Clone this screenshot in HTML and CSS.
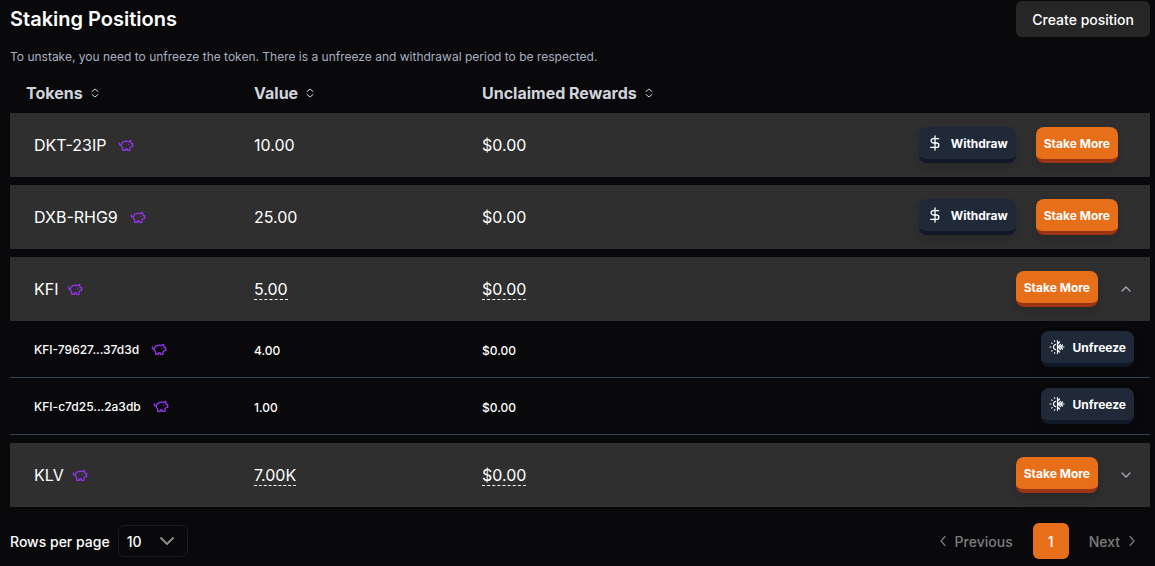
FILE: index.html
```html
<!DOCTYPE html>
<html lang="en">
<head>
    <meta charset="UTF-8">
    <meta name="viewport" content="width=device-width, initial-scale=1.0">
    <title>Staking Positions</title>
    <link rel="stylesheet" href="styles.css">
</head>
<body>
    <!-- icon set -->
    <svg class="sprite" aria-hidden="true">
        <symbol id="piggy" viewBox="0 0 24 24">
            <path d="M19 5c-1.500 0-2.800 1.400-3 2-3.500-1.500-11-.3-11 5 0 1.800 0 3 2 4.500V20h4v-2h3v2h4v-4c1-.5 1.700-1 2-2h2v-4h-2c0-1-.5-1.500-1-2V5z"/>
            <path d="M2 9v1c0 1.100.9 2 2 2h1M16 11h.01"/>
        </symbol>
        <symbol id="sort" viewBox="0 0 8 10">
            <path d="M1 3.500L4 1l3 2.500M1 6.500L4 9l3-2.500"/>
        </symbol>
        <symbol id="dollar" viewBox="0 0 24 24">
            <path d="M12 1.500v21M17.500 5.500H9.500a3.250 3.250 0 0 0 0 6.500h5a3.250 3.250 0 0 1 0 6.500H5.500"/>
        </symbol>
        <symbol id="unfreeze" viewBox="0 0 16 16">
            <path d="M8.500 1.500v13M6.500 5.300a2.800 2.800 0 0 0 0 5.400M9 8h6M9 4.500l1.500-1.500M9 11.500l1.500 1.500M11.500 8l2-2M11.500 8l2 2M9 8l2.500-2.500M9 8l2.500 2.500M1 8h1M2.700 4l.5.400M2.700 12l.5-.4M5.500 1.800l.2.500M5.500 14.200l.2-.5"/>
        </symbol>
        <symbol id="up" viewBox="0 0 16 16"><path d="M4 10l4-4 4 4"/></symbol>
        <symbol id="down" viewBox="0 0 16 16"><path d="M4 6l4 4 4-4"/></symbol>
        <symbol id="left" viewBox="0 0 16 16"><path d="M10 3.500L6 8l4 4.500"/></symbol>
        <symbol id="right" viewBox="0 0 16 16"><path d="M6 3.500L10 8l-4 4.500"/></symbol>
    </svg>

    <main>
        <header class="top">
            <h1>Staking Positions</h1>
            <button type="button" class="create">Create position</button>
        </header>
        <p class="hint">To unstake, you need to unfreeze the token. There is a unfreeze and withdrawal period to be respected.</p>

        <table>
            <thead>
                <tr>
                    <th><button type="button" class="sort">Tokens <svg><use href="#sort"/></svg></button></th>
                    <th><button type="button" class="sort">Value <svg><use href="#sort"/></svg></button></th>
                    <th><button type="button" class="sort">Unclaimed Rewards <svg><use href="#sort"/></svg></button></th>
                    <td></td>
                </tr>
            </thead>
            <tbody>
                <tr class="token">
                    <td><div class="name wide">DKT-23IP <svg class="icon pig"><use href="#piggy"/></svg></div></td>
                    <td>10.00</td>
                    <td>$0.00</td>
                    <td>
                        <div class="actions inset">
                            <button type="button" class="btn dark"><svg class="icon dollar"><use href="#dollar"/></svg>Withdraw</button>
                            <button type="button" class="btn orange">Stake More</button>
                        </div>
                    </td>
                </tr>
                <tr class="token">
                    <td><div class="name wide">DXB-RHG9 <svg class="icon pig"><use href="#piggy"/></svg></div></td>
                    <td>25.00</td>
                    <td>$0.00</td>
                    <td>
                        <div class="actions inset">
                            <button type="button" class="btn dark"><svg class="icon dollar"><use href="#dollar"/></svg>Withdraw</button>
                            <button type="button" class="btn orange">Stake More</button>
                        </div>
                    </td>
                </tr>
                <tr class="token">
                    <td><div class="name">KFI <svg class="icon pig"><use href="#piggy"/></svg></div></td>
                    <td><span class="dashed">5.00</span></td>
                    <td><span class="dashed">$0.00</span></td>
                    <td>
                        <div class="actions">
                            <button type="button" class="btn orange">Stake More</button>
                            <button type="button" class="toggle" aria-label="Collapse"><svg class="icon"><use href="#up"/></svg></button>
                        </div>
                    </td>
                </tr>
                <tr class="bucket">
                    <td><div class="name wide">KFI-79627...37d3d <svg class="icon pig"><use href="#piggy"/></svg></div></td>
                    <td class="amount">4.00</td>
                    <td class="amount">$0.00</td>
                    <td>
                        <div class="actions">
                            <button type="button" class="btn dark"><svg class="icon"><use href="#unfreeze"/></svg>Unfreeze</button>
                        </div>
                    </td>
                </tr>
                <tr class="bucket">
                    <td><div class="name wide">KFI-c7d25...2a3db <svg class="icon pig"><use href="#piggy"/></svg></div></td>
                    <td class="amount">1.00</td>
                    <td class="amount">$0.00</td>
                    <td>
                        <div class="actions">
                            <button type="button" class="btn dark"><svg class="icon"><use href="#unfreeze"/></svg>Unfreeze</button>
                        </div>
                    </td>
                </tr>
                <tr class="token">
                    <td><div class="name">KLV <svg class="icon pig"><use href="#piggy"/></svg></div></td>
                    <td><span class="dashed">7.00K</span></td>
                    <td><span class="dashed">$0.00</span></td>
                    <td>
                        <div class="actions">
                            <button type="button" class="btn orange">Stake More</button>
                            <button type="button" class="toggle" aria-label="Expand"><svg class="icon"><use href="#down"/></svg></button>
                        </div>
                    </td>
                </tr>
            </tbody>
        </table>

        <footer>
            <div class="rows">
                <label for="rowsPerPage">Rows per page</label>
                <div class="select">
                    <select id="rowsPerPage">
                        <option>10</option>
                        <option>25</option>
                        <option>50</option>
                    </select>
                    <svg class="icon"><use href="#down"/></svg>
                </div>
            </div>
            <nav class="pager">
                <button type="button" class="step"><svg class="icon"><use href="#left"/></svg>Previous</button>
                <button type="button" class="page">1</button>
                <button type="button" class="step">Next<svg class="icon"><use href="#right"/></svg></button>
            </nav>
        </footer>
    </main>
</body>
</html>
```
FILE: styles.css
```css
:root {
    --bg: #09090b;
    --row: #2f2f2f;
    --orange: #e86f1a;
    --slate: #1f2937;
}
* {
    box-sizing: border-box;
}
body {
    margin: 0;
    background: var(--bg);
    color: white;
    font-family: Inter, "Liberation Sans", sans-serif;
    font-size: 16px;
}
main {
    padding: 1px 5px 0 10px;
}
button {
    padding: 0;
    border: none;
    background: none;
    color: inherit;
    font: inherit;
    cursor: pointer;
}
svg {
    fill: none;
    stroke: currentColor;
    stroke-width: 2;
    stroke-linecap: round;
    stroke-linejoin: round;
}
.sprite {
    display: none;
}
.icon {
    flex: none;
    width: 16px;
    height: 16px;
}
.top {
    display: flex;
    justify-content: space-between;
    align-items: center;
}
h1 {
    margin: 0;
    font-size: 20px;
    font-weight: 600;
}
.create {
    height: 36px;
    padding: 0 16px;
    border-radius: 6px;
    background: #262626;
    font-size: 14px;
    font-weight: 500;
}
.hint {
    margin: 12px 0 8px;
    color: #a8b0c0;
    font-size: 12px;
    line-height: 16px;
}

/* positions table */
table {
    width: 100%;
    border-spacing: 0;
    table-layout: fixed;
}
th, td {
    width: 20%;
    padding: 0 16px;
    text-align: left;
    font-weight: 400;
}
th:last-child, td:last-child {
    width: 40%;
}
thead th {
    height: 32px;
    padding-top: 8px;
}
.sort {
    display: flex;
    align-items: center;
    gap: 8px;
    color: #d1d5db;
    font-weight: 700;
}
.sort svg {
    width: 8px;
    height: 10px;
    stroke-width: 1;
}
.token td {
    height: 72px;
    border-top: 8px solid var(--bg);
    background: var(--row);
}
.bucket td {
    height: 57px;
    border-bottom: 1px solid #334155;
    font-size: 12px;
    font-weight: 500;
}
.bucket .amount {
    padding-top: 2px;
}
.name {
    display: flex;
    align-items: center;
    gap: 8px;
    padding-left: 8px;
}
.wide {
    gap: 12px;
}
.pig {
    color: #9333ea;
}
.dashed {
    border-bottom: 1px dashed white;
}
.actions {
    display: flex;
    justify-content: flex-end;
    align-items: center;
    gap: 20px;
}
.inset {
    padding-right: 16px;
}
.btn {
    display: flex;
    align-items: center;
    gap: 8px;
    height: 36px;
    padding: 0 8px;
    border-bottom: 4px solid;
    border-radius: 8px;
    box-shadow: 0 4px 8px rgba(0, 0, 0, 0.15);
    font-size: 12px;
    font-weight: 700;
}
.orange {
    background: var(--orange);
    border-color: #9a3412;
}
.dark {
    background: var(--slate);
    border-color: #111827;
}
.btn .icon, .toggle .icon {
    stroke-width: 1.2;
}
.btn .dollar {
    stroke-width: 2;
}
.toggle {
    display: flex;
    color: #a8b0c0;
}

/* footer */
footer {
    display: flex;
    justify-content: space-between;
    align-items: center;
    padding-top: 16px;
    font-size: 14px;
    font-weight: 500;
}
.rows, .pager, .step {
    display: flex;
    align-items: center;
    gap: 8px;
}
.select {
    position: relative;
}
.select select {
    appearance: none;
    width: 70px;
    height: 32px;
    padding: 0 8px;
    border: 1px solid #1c1c1f;
    border-radius: 6px;
    background: transparent;
    color: white;
    font: inherit;
}
.select .icon {
    position: absolute;
    top: 4px;
    right: 9px;
    width: 24px;
    height: 24px;
    color: #8c8c8c;
    stroke-width: 1.3;
    pointer-events: none;
}
.pager {
    gap: 20px;
    padding-right: 10px;
}
.pager .step {
    gap: 4px;
    color: #7c7c7e;
}
.step .icon {
    stroke-width: 1.2;
}
.page {
    width: 36px;
    height: 36px;
    border-radius: 6px;
    background: var(--orange);
}
```
